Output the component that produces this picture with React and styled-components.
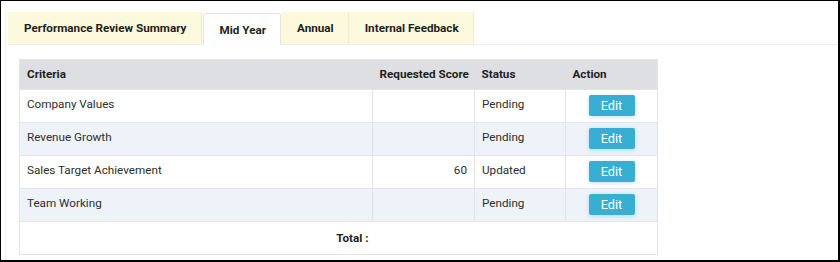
import React from "react";
import styled, { createGlobalStyle } from "styled-components";

const Global = createGlobalStyle`
  html, body { margin: 0; padding: 0; background: #fff; }
  body { font-family: Roboto, "Liberation Sans", Arial, sans-serif; }
  * { box-sizing: border-box; }
`;

const Frame = styled.div`
  width: 840px;
  height: 262px;
  border-style: solid;
  border-color: #000;
  border-width: 1px 2px 2px 1px;
  padding: 11px 0 0 4px;
  background: #fff;
  overflow: hidden;
`;

const Panel = styled.div`
  height: 100%;
  border-left: 1px solid #f0f0f2;
  padding-left: 2px;
`;

const TabBar = styled.div`
  display: flex;
  align-items: flex-end;
  height: 33px;
  border-bottom: 1px solid #ececee;
`;

const Tab = styled.div`
  height: 32px;
  display: flex;
  align-items: center;
  padding: 0 14px 0 16px;
  font-size: 11.7px;
  font-weight: 700;
  color: #1e1e1e;
  white-space: nowrap;
  background: ${(p) => (p.$active ? "#fff" : "#fcf9dc")};
  border-right: 1px solid ${(p) => (p.$active ? "#e4e4e8" : "#f1edc6")};
  ${(p) =>
    p.$active &&
    `
    border-left: 1px solid #e4e4e8;
    border-top: 1px solid #e4e4e8;
    border-radius: 3px 3px 0 0;
    margin-left: 1px;
    height: 32px;
    margin-bottom: -1px;
  `}
`;

const Content = styled.div`
  padding: 14px 0 0 11px;
`;

const Table = styled.table`
  width: 638px;
  border-collapse: collapse;
  table-layout: fixed;
  border: 1px solid #e3e4e8;
  font-size: 11.7px;
  color: #2e2e2e;
`;

const HeadRow = styled.tr`
  height: 30px;
  background: #dedfe3;
`;

const Th = styled.th`
  text-align: left;
  font-weight: 700;
  color: #1e1e1e;
  padding: 0 7px 2px;
  line-height: 18px;
  white-space: nowrap;
  vertical-align: middle;
`;

const Row = styled.tr`
  height: 33px;
  background: ${(p) => (p.$alt ? "#eef2f9" : "#fff")};
  border-top: 1px solid #e3e4e8;
`;

const Td = styled.td`
  border-left: 1px solid #e3e4e8;
  padding: 5px 7px 0;
  line-height: 18px;
  white-space: nowrap;
  vertical-align: top;
  text-align: ${(p) => p.$align || "left"};
  &:first-child { border-left: none; }
`;

const ActionTd = styled(Td)`
  padding: 5px 0 0;
  text-align: center;
`;

const EditButton = styled.button`
  width: 46px;
  height: 21px;
  border: none;
  border-radius: 2px;
  background: #38aed3;
  color: #fff;
  font-family: Roboto, "Liberation Sans", Arial, sans-serif;
  font-size: 12.7px;
  line-height: 21px;
  padding: 0;
  box-shadow: 0 1px 4px rgba(56, 174, 211, 0.35);
  cursor: pointer;
`;

const TotalRow = styled.tr`
  height: 33px;
  border-top: 1px solid #e3e4e8;
`;

const TotalTd = styled.td`
  text-align: right;
  font-weight: 700;
  color: #1e1e1e;
  padding: 0 4px 0 7px;
  vertical-align: middle;
`;

const tabs = ["Performance Review Summary", "Mid Year", "Annual", "Internal Feedback"];

const rows = [
  { name: "Company Values", score: "", status: "Pending" },
  { name: "Revenue Growth", score: "", status: "Pending" },
  { name: "Sales Target Achievement", score: "60", status: "Updated" },
  { name: "Team Working", score: "", status: "Pending" },
];

export default function App() {
  return (
    <>
      <Global />
      <Frame>
        <Panel>
          <TabBar>
            {tabs.map((t) => (
              <Tab key={t} $active={t === "Mid Year"}>
                {t}
              </Tab>
            ))}
          </TabBar>
          <Content>
            <Table>
              <colgroup>
                <col style={{ width: 353 }} />
                <col style={{ width: 102 }} />
                <col style={{ width: 91 }} />
                <col style={{ width: 92 }} />
              </colgroup>
              <thead>
                <HeadRow>
                  <Th>Criteria</Th>
                  <Th>Requested Score</Th>
                  <Th>Status</Th>
                  <Th>Action</Th>
                </HeadRow>
              </thead>
              <tbody>
                {rows.map((r, i) => (
                  <Row key={r.name} $alt={i % 2 === 1}>
                    <Td>{r.name}</Td>
                    <Td $align="right">{r.score}</Td>
                    <Td>{r.status}</Td>
                    <ActionTd>
                      <EditButton>Edit</EditButton>
                    </ActionTd>
                  </Row>
                ))}
                <TotalRow>
                  <TotalTd>Total :</TotalTd>
                  <td />
                  <td />
                  <td />
                </TotalRow>
              </tbody>
            </Table>
          </Content>
        </Panel>
      </Frame>
    </>
  );
}
